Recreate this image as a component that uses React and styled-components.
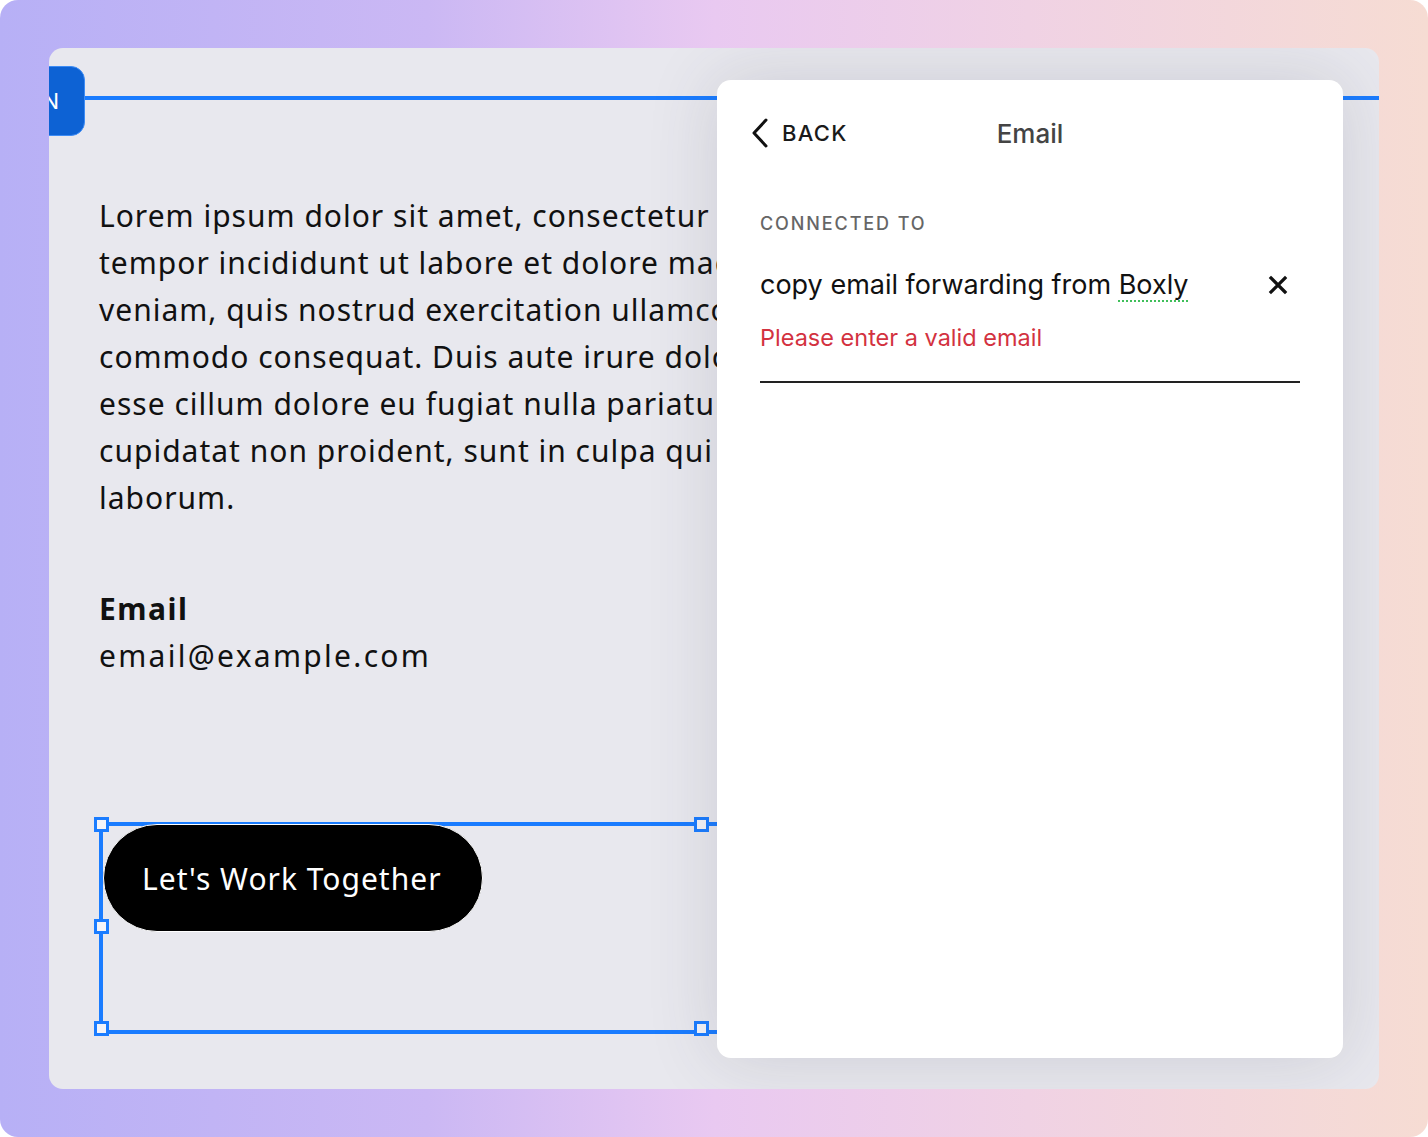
import React from 'react'
import styled, { createGlobalStyle } from 'styled-components'

const GlobalStyle = createGlobalStyle`
  html, body {
    margin: 0;
    padding: 0;
    background: #fff;
  }
  body {
    font-family: 'Noto Sans', 'Liberation Sans', sans-serif;
  }
`

const lines = [
  'Lorem ipsum dolor sit amet, consectetur adipiscing elit, sed do eiusmod',
  'tempor incididunt ut labore et dolore magna aliqua. Ut enim ad minim',
  'veniam, quis nostrud exercitation ullamco laboris nisi ut aliquip ex ea',
  'commodo consequat. Duis aute irure dolor in reprehenderit in voluptate velit',
  'esse cillum dolore eu fugiat nulla pariatur. Excepteur sint occaecat',
  'cupidatat non proident, sunt in culpa qui officia deserunt mollit anim id est',
  'laborum.',
]

export default function App() {
  return (
    <>
      <GlobalStyle />
      <Frame>
        <Canvas>
          <Section>
            <SectionTab>N</SectionTab>
            <Body>
              {lines.map(l => (
                <Line key={l}>{l}</Line>
              ))}
            </Body>
            <Contact>
              <ContactLabel>Email</ContactLabel>
              <ContactValue>email@example.com</ContactValue>
            </Contact>
            <ButtonBlock>
              <Handle $x="left" $y="top" />
              <Handle $x="right" $y="top" />
              <Handle $x="left" $y="middle" />
              <Handle $x="left" $y="bottom" />
              <Handle $x="right" $y="bottom" />
              <CtaButton>Let's Work Together</CtaButton>
            </ButtonBlock>
          </Section>

          <Panel>
            <PanelHeader>
              <BackButton>
                <svg width="20" height="30" viewBox="0 0 20 30" fill="none">
                  <path
                    d="M16 2 L4 15 L16 28"
                    stroke="#111"
                    strokeWidth="3"
                    strokeLinecap="round"
                    strokeLinejoin="round"
                  />
                </svg>
                BACK
              </BackButton>
              <PanelTitle>Email</PanelTitle>
            </PanelHeader>

            <PanelBody>
              <FieldLabel>Connected to</FieldLabel>
              <Field>
                <FieldRow>
                  <FieldValue>
                    copy email forwarding from <Spell>Boxly</Spell>
                  </FieldValue>
                  <ClearButton>
                    <svg width="20" height="20" viewBox="0 0 20 20">
                      <path
                        d="M3 3 L17 17 M17 3 L3 17"
                        stroke="#111"
                        strokeWidth="3.2"
                        strokeLinecap="square"
                      />
                    </svg>
                  </ClearButton>
                </FieldRow>
                <FieldError>Please enter a valid email</FieldError>
              </Field>
            </PanelBody>
          </Panel>
        </Canvas>
      </Frame>
    </>
  )
}

const Frame = styled.div`
  width: 1428px;
  height: 1137px;
  box-sizing: border-box;
  padding: 48px 49px;
  border-radius: 18px;
  overflow: hidden;
  background: linear-gradient(
    90deg,
    #b7b0f6 0%,
    #cbb8f4 30%,
    #e9c9f1 50%,
    #f0d2e4 72%,
    #f6dcd3 100%
  );
`

const Canvas = styled.div`
  position: relative;
  height: 1041px;
  border-radius: 14px;
  overflow: hidden;
  background: #e8e8ee;
  padding-top: 48px;
  box-sizing: border-box;
`

const Section = styled.div`
  position: relative;
  display: flex;
  flex-direction: column;
  align-items: flex-start;
  border-top: 4px solid #1a7cff;
  padding: 92px 0 0 50px;
`

const SectionTab = styled.div`
  position: absolute;
  left: -14px;
  top: -34px;
  width: 50px;
  height: 70px;
  box-sizing: border-box;
  border-radius: 14px;
  background: #0d62d4;
  border: 1px solid #3d8cf5;
  color: #fff;
  font-family: 'Inter', sans-serif;
  font-size: 22px;
  display: flex;
  align-items: center;
  justify-content: flex-end;
  padding-right: 25px;
`

const Body = styled.p`
  margin: 0;
  font-family: 'Noto Sans', sans-serif;
  font-size: 30px;
  letter-spacing: 1px;
  line-height: 47px;
  color: #111;
`

const Line = styled.span`
  display: block;
  white-space: nowrap;
`

const Contact = styled.div`
  margin-top: 64px;
  font-family: 'Noto Sans', sans-serif;
  font-size: 30px;
  line-height: 47px;
  color: #111;
`

const ContactLabel = styled.div`
  font-weight: 700;
  letter-spacing: 1.5px;
`

const ContactValue = styled.div`
  letter-spacing: 2.3px;
`

const ButtonBlock = styled.div`
  position: relative;
  margin-top: 143px;
  width: 700px;
  height: 212px;
  border-top: 4px solid #1a7cff;
  border-bottom: 4px solid #1a7cff;
  border-left: 4px solid #1a7cff;
  box-sizing: border-box;
`

const Handle = styled.span`
  position: absolute;
  width: 15px;
  height: 15px;
  box-sizing: border-box;
  background: #f4f4f8;
  border: 3px solid #1a7cff;
  left: ${p => (p.$x === 'left' ? '-9.5px' : '590.5px')};
  top: ${p =>
    p.$y === 'top' ? '-9.5px' : p.$y === 'middle' ? '92.5px' : '194.5px'};
`

const CtaButton = styled.div`
  display: inline-flex;
  align-items: center;
  height: 108px;
  box-sizing: border-box;
  padding: 0 40px 0 38px;
  background: #000;
  color: #fff;
  border-radius: 54px;
  border: 1px solid #fff;
  font-family: 'Noto Sans', sans-serif;
  font-size: 30px;
  letter-spacing: 1px;
  margin-top: -2px;
`

const Panel = styled.div`
  position: absolute;
  top: 32px;
  left: 668px;
  width: 626px;
  height: 978px;
  background: #fff;
  border-radius: 14px;
  box-shadow: 0 0 70px rgba(60, 60, 80, 0.16);
  font-family: 'Inter', 'Liberation Sans', sans-serif;
  display: flex;
  flex-direction: column;
`

const PanelHeader = styled.div`
  position: relative;
  display: flex;
  align-items: center;
  height: 106px;
  padding: 0 33px;
`

const BackButton = styled.div`
  display: flex;
  align-items: center;
  gap: 12px;
  font-size: 22px;
  font-weight: 500;
  letter-spacing: 1.3px;
  color: #1a1a1a;
`

const PanelTitle = styled.div`
  position: absolute;
  left: 0;
  right: 0;
  text-align: center;
  font-size: 26px;
  font-weight: 500;
  color: #444;
  pointer-events: none;
`

const PanelBody = styled.div`
  padding: 24px 43px 0 43px;
`

const FieldLabel = styled.div`
  font-size: 18px;
  font-weight: 500;
  letter-spacing: 1.9px;
  text-transform: uppercase;
  color: #666;
  line-height: 28px;
`

const Field = styled.div`
  margin-top: 27px;
  border-bottom: 2px solid #222;
  padding-bottom: 28px;
`

const FieldRow = styled.div`
  display: flex;
  align-items: center;
  justify-content: space-between;
  padding-right: 12px;
`

const FieldValue = styled.div`
  font-size: 27px;
  color: #111;
  line-height: 40px;
`

const Spell = styled.span`
  text-decoration: underline dotted #3fbf5a;
  text-decoration-thickness: 2px;
  text-underline-offset: 6px;
`

const ClearButton = styled.span`
  display: flex;
  width: 20px;
  height: 20px;
`

const FieldError = styled.div`
  margin-top: 18px;
  font-size: 23.5px;
  line-height: 30px;
  color: #d3323f;
`
